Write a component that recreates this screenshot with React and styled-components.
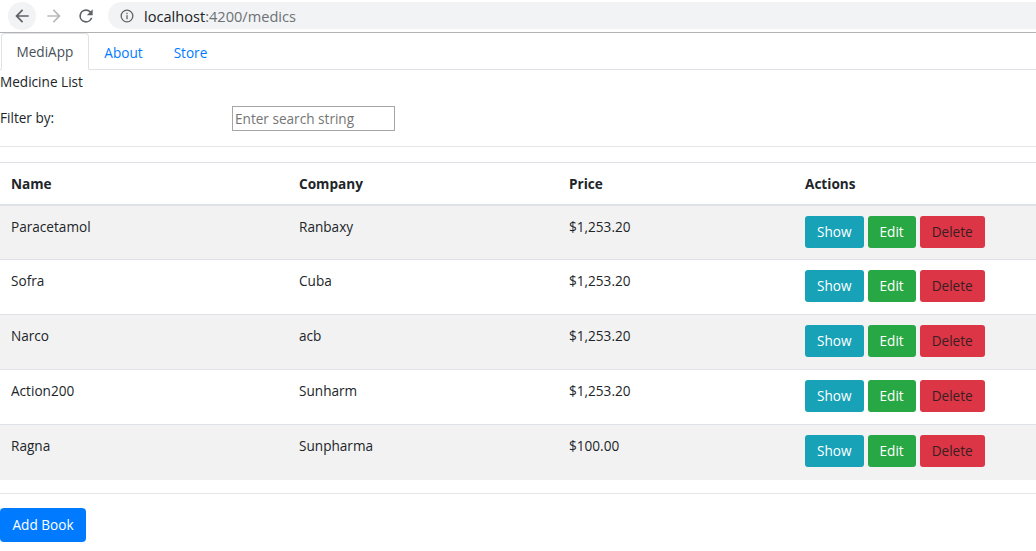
import React from "react";
import styled, { createGlobalStyle } from "styled-components";

const GlobalStyle = createGlobalStyle`
  * { box-sizing: border-box; }
  body {
    margin: 0;
    background: #fff;
    font-family: "Open Sans", "Noto Sans", sans-serif;
    font-size: 13.6px;
    color: #212529;
  }
`;

const medics = [
  { name: "Paracetamol", company: "Ranbaxy", price: "$1,253.20" },
  { name: "Sofra", company: "Cuba", price: "$1,253.20" },
  { name: "Narco", company: "acb", price: "$1,253.20" },
  { name: "Action200", company: "Sunharm", price: "$1,253.20" },
  { name: "Ragna", company: "Sunpharma", price: "$100.00" },
];

function App() {
  return (
    <>
      <GlobalStyle />
      <Chrome>
        <NavBtn active>
          <svg width="20" height="20" viewBox="0 0 24 24">
            <path d="M20 11H7.83l5.59-5.59L12 4l-8 8 8 8 1.41-1.41L7.83 13H20v-2z" fill="#5f6368" />
          </svg>
        </NavBtn>
        <NavBtn>
          <svg width="20" height="20" viewBox="0 0 24 24">
            <path d="M12 4l-1.41 1.41L16.17 11H4v2h12.17l-5.58 5.59L12 20l8-8z" fill="#b8babd" />
          </svg>
        </NavBtn>
        <NavBtn>
          <svg width="20" height="20" viewBox="0 0 24 24">
            <path d="M17.65 6.35A7.96 7.96 0 0 0 12 4a8 8 0 1 0 7.73 10h-2.08A6 6 0 1 1 12 6c1.66 0 3.14.69 4.22 1.78L13 11h7V4l-2.35 2.35z" fill="#5f6368" />
          </svg>
        </NavBtn>
        <Omnibox>
          <svg width="14" height="14" viewBox="0 0 24 24">
            <circle cx="12" cy="12" r="10" fill="none" stroke="#5f6368" strokeWidth="2.2" />
            <rect x="10.9" y="10.5" width="2.2" height="7" fill="#5f6368" />
            <rect x="10.9" y="6.5" width="2.2" height="2.3" fill="#5f6368" />
          </svg>
          <Url>
            localhost<span>:4200/medics</span>
          </Url>
        </Omnibox>
      </Chrome>

      <Tabs>
        <Tab active>MediApp</Tab>
        <Tab>About</Tab>
        <Tab>Store</Tab>
      </Tabs>

      <Title>Medicine List</Title>
      <FilterRow>
        <label>Filter by:</label>
        <Search placeholder="Enter search string" />
      </FilterRow>
      <Rule />

      <Table>
        <colgroup>
          <col style={{ width: 288 }} />
          <col style={{ width: 270 }} />
          <col style={{ width: 236 }} />
          <col />
        </colgroup>
        <thead>
          <tr>
            <Th>Name</Th>
            <Th>Company</Th>
            <Th>Price</Th>
            <Th>Actions</Th>
          </tr>
        </thead>
        <tbody>
          {medics.map((m, i) => (
            <Row key={m.name} $striped={i % 2 === 0}>
              <Td>{m.name}</Td>
              <Td>{m.company}</Td>
              <Td>{m.price}</Td>
              <Td>
                <Actions>
                  <Btn $kind="info">Show</Btn>
                  <Btn $kind="success">Edit</Btn>
                  <Btn $kind="danger">Delete</Btn>
                </Actions>
              </Td>
            </Row>
          ))}
        </tbody>
      </Table>
      <Rule $bottom />
      <AddBtn>Add Book</AddBtn>
    </>
  );
}

export default App;

const Chrome = styled.div`
  height: 33px;
  display: flex;
  align-items: center;
  padding: 0 0 1px 8px;
  gap: 4px;
  border-bottom: 1px solid #b3b3b3;
  background: #fff;
`;

const NavBtn = styled.div`
  width: 28px;
  height: 28px;
  border-radius: 50%;
  display: flex;
  align-items: center;
  justify-content: center;
  background: ${(p) => (p.active ? "#f1f3f4" : "transparent")};
`;

const Omnibox = styled.div`
  flex: 1;
  height: 27px;
  margin-left: 4px;
  border-radius: 14px 0 0 14px;
  background: #f1f3f4;
  display: flex;
  align-items: center;
  padding-left: 12px;
  gap: 10px;
`;

const Url = styled.div`
  font-size: 14.6px;
  color: #202124;
  span {
    color: #6e7175;
  }
`;

const Tabs = styled.div`
  display: flex;
  height: 37px;
  border-bottom: 1px solid #dee2e6;
  padding-left: 1px;
`;

const Tab = styled.div`
  padding: 0 14.5px;
  margin-bottom: -1px;
  display: flex;
  align-items: center;
  color: ${(p) => (p.active ? "#495057" : "#007bff")};
  border: 1px solid ${(p) => (p.active ? "#dee2e6" : "transparent")};
  border-bottom: ${(p) => (p.active ? "1px solid #fff" : "0")};
  border-radius: 4px 4px 0 0;
  background: ${(p) => (p.active ? "#fff" : "transparent")};
`;

const Title = styled.div`
  line-height: 23px;
`;

const FilterRow = styled.div`
  display: flex;
  align-items: flex-start;
  margin-top: 13px;
  label {
    width: 232px;
    line-height: 24px;
  }
`;

const Search = styled.input`
  width: 163px;
  height: 25px;
  border: 1px solid #a6a6a6;
  font: inherit;
  padding: 0 2px;
  outline: none;
  &::placeholder {
    color: #757575;
  }
`;

const Rule = styled.hr`
  border: 0;
  border-top: 1px solid #e6e6e6;
  margin: ${(p) => (p.$bottom ? "13px 0 14px" : "15px 0 15px")};
`;

const Table = styled.table`
  width: 100%;
  border-collapse: collapse;
  table-layout: fixed;
`;

const Th = styled.th`
  text-align: left;
  font-weight: 700;
  height: 42px;
  padding: 0 11px;
  border-top: 1px solid #dee2e6;
  border-bottom: 2px solid #dee2e6;
  vertical-align: middle;
`;

const Row = styled.tr`
  background: ${(p) => (p.$striped ? "#f2f2f2" : "#fff")};
`;

const Td = styled.td`
  height: 55px;
  padding: 11px 11px 0;
  vertical-align: top;
  line-height: 20px;
  border-top: 1px solid #dee2e6;
`;

const Actions = styled.div`
  display: flex;
  gap: 4px;
  margin-top: -1px;
`;

const colors = {
  info: ["#17a2b8", "#fff"],
  success: ["#28a745", "#fff"],
  danger: ["#dc3545", "#3a1f22"],
};

const Btn = styled.button`
  height: 32px;
  padding: 0 12px;
  border: 0;
  border-radius: 3px;
  font: inherit;
  background: ${(p) => colors[p.$kind][0]};
  color: ${(p) => colors[p.$kind][1]};
`;

const AddBtn = styled.button`
  height: 34px;
  padding: 0 12.5px;
  border: 0;
  border-radius: 4px;
  font: inherit;
  background: #007bff;
  color: #fff;
`;
